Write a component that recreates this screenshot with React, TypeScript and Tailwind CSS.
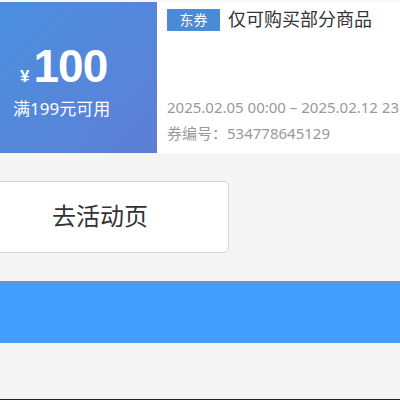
const font = { fontFamily: '"Liberation Sans", "Noto Sans CJK SC", sans-serif' };
const latin = { fontFamily: '"Noto Sans", "Noto Sans CJK SC", sans-serif' };

export default function App() {
  return (
    <div
      className="w-[400px] h-[400px] overflow-hidden bg-[#f5f5f5] flex flex-col"
      style={font}
    >
      {/* coupon card */}
      <div className="h-[2px] bg-[#f7f7f7]" />
      <div className="flex h-[151px] bg-white">
        <div className="w-[157px] shrink-0 flex flex-col justify-center pl-[13px] pt-[4px] text-white bg-gradient-to-br from-[#4a8fde] to-[#5d7fd6]">
          <div className="flex items-baseline pl-[7px]">
            <span className="text-[17px] font-bold mr-[4px]">¥</span>
            <span className="text-[46px] font-bold leading-[52px] tracking-[-1px]">100</span>
          </div>
          <div className="text-[17px] mt-[6px] leading-[22px]" style={latin}>满199元可用</div>
        </div>
        <div className="flex-1 min-w-0 flex flex-col pl-[10px] pt-[7px] whitespace-nowrap">
          <div className="flex items-center">
            <span className="bg-[#4a8ad6] text-white text-[14px] leading-[22px] w-[53px] text-center">东券</span>
            <span className="ml-[8px] text-[18px] text-[#333] leading-[22px]">仅可购买部分商品</span>
          </div>
          <div className="mt-[65px] text-[15px] text-[#999] leading-[22px]" style={latin}>
            2025.02.05 00:00 – 2025.02.12 23:59
          </div>
          <div className="mt-[4px] text-[15px] text-[#999] leading-[22px]" style={latin}>
            券编号：534778645129
          </div>
        </div>
      </div>

      {/* action button */}
      <div className="mt-[28px] flex">
        <button className="ml-[-29px] w-[258px] h-[72px] bg-white border border-[#d4d4d4] rounded-[5px] text-[24px] text-[#333]">
          去活动页
        </button>
      </div>

      {/* bottom bar */}
      <div className="mt-[28px] h-[62px] bg-[#429dff] border-t-[2px] border-[#5a98e0]" />
      <div className="flex-1" />
      <div className="h-[1px] bg-[#222]" />
    </div>
  );
}
